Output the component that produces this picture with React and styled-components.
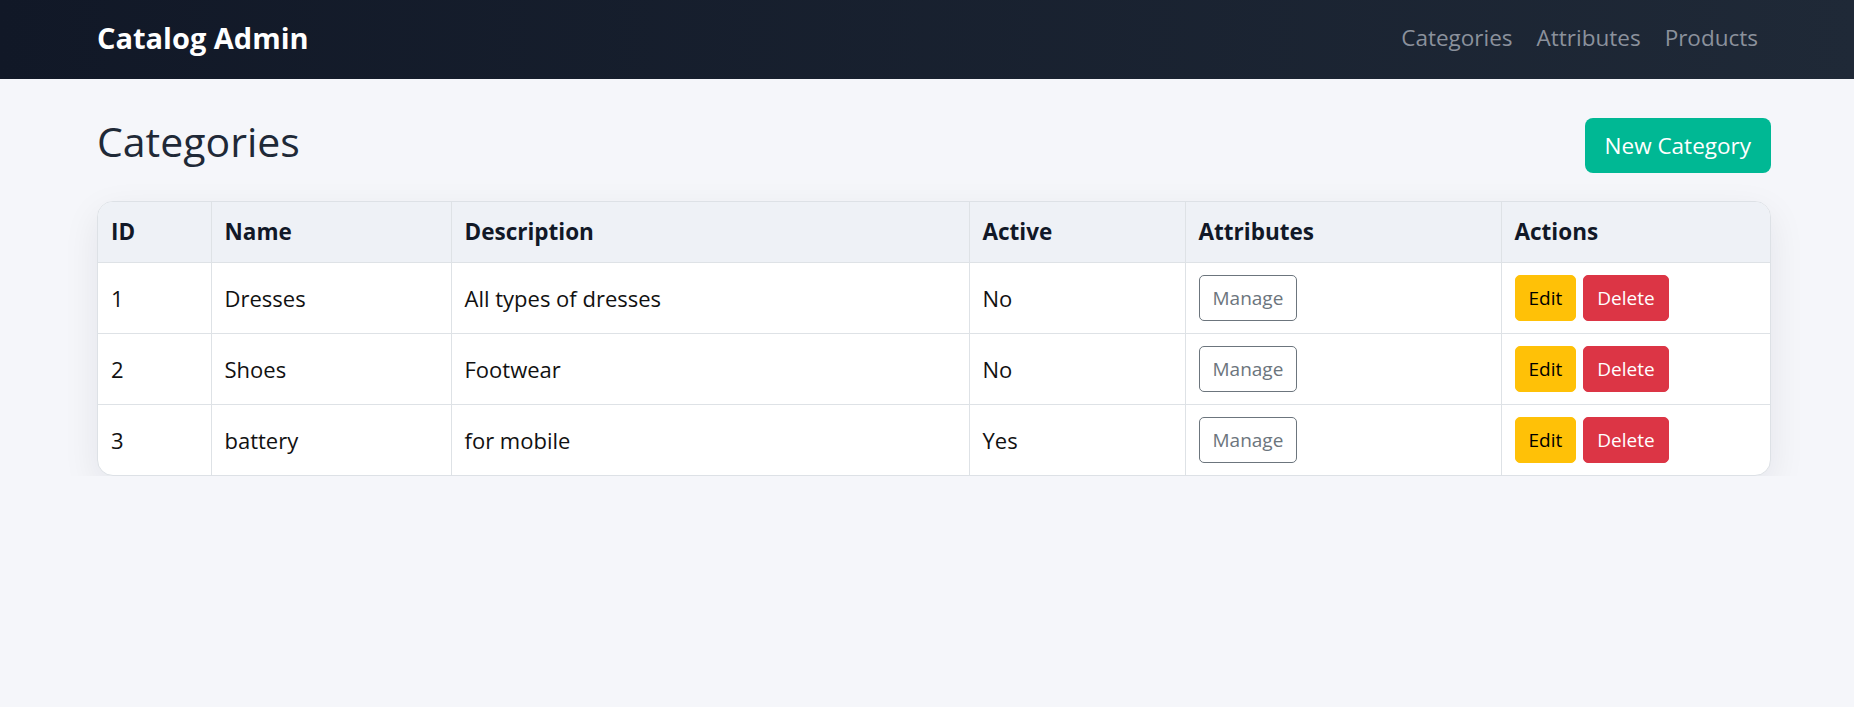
import styled, { createGlobalStyle } from "styled-components";

const categories = [
  { id: 1, name: "Dresses", description: "All types of dresses", active: false },
  { id: 2, name: "Shoes", description: "Footwear", active: false },
  { id: 3, name: "battery", description: "for mobile", active: true },
];

export default function App() {
  return (
    <>
      <GlobalStyle />
      <Navbar>
        <Brand>Catalog Admin</Brand>
        <NavLinks>
          <NavLink href="#">Categories</NavLink>
          <NavLink href="#">Attributes</NavLink>
          <NavLink href="#">Products</NavLink>
        </NavLinks>
      </Navbar>
      <Main>
        <PageHeader>
          <Title>Categories</Title>
          <PrimaryButton>New Category</PrimaryButton>
        </PageHeader>
        <TableCard>
          <Table>
            <colgroup>
              <col style={{ width: 113 }} />
              <col style={{ width: 240 }} />
              <col style={{ width: 518 }} />
              <col style={{ width: 216 }} />
              <col style={{ width: 316 }} />
              <col />
            </colgroup>
            <thead>
              <tr>
                <Th>ID</Th>
                <Th>Name</Th>
                <Th>Description</Th>
                <Th>Active</Th>
                <Th>Attributes</Th>
                <Th>Actions</Th>
              </tr>
            </thead>
            <tbody>
              {categories.map((c) => (
                <tr key={c.id}>
                  <Td>{c.id}</Td>
                  <Td>{c.name}</Td>
                  <Td>{c.description}</Td>
                  <Td>{c.active ? "Yes" : "No"}</Td>
                  <Td>
                    <SmallButton $variant="outline">Manage</SmallButton>
                  </Td>
                  <Td>
                    <Actions>
                      <SmallButton $variant="warning">Edit</SmallButton>
                      <SmallButton $variant="danger">Delete</SmallButton>
                    </Actions>
                  </Td>
                </tr>
              ))}
            </tbody>
          </Table>
        </TableCard>
      </Main>
    </>
  );
}

const GlobalStyle = createGlobalStyle`
  html, body {
    margin: 0;
    background: #f5f6fa;
    font-family: 'Open Sans', 'Noto Sans', sans-serif;
  }
  * { box-sizing: border-box; }
`;

const Navbar = styled.header`
  height: 79px;
  padding: 0 84px 5px 97px;
  display: flex;
  align-items: center;
  justify-content: space-between;
  background: linear-gradient(90deg, #111827, #1f2937);
`;

const Brand = styled.div`
  color: #ffffff;
  font-weight: 700;
  font-size: 29px;
`;

const NavLinks = styled.nav`
  display: flex;
  gap: 24px;
  padding-right: 12px;
`;

const NavLink = styled.a`
  color: #8b919c;
  text-decoration: none;
  font-size: 22.5px;
`;

const Main = styled.main`
  padding: 39px 83px 0 97px;
`;

const PageHeader = styled.div`
  display: flex;
  align-items: center;
  justify-content: space-between;
  margin-bottom: 28px;
`;

const Title = styled.h1`
  margin: 0;
  padding-bottom: 9px;
  font-size: 41px;
  line-height: 46px;
  font-weight: 500;
  color: #1f2937;
`;

const PrimaryButton = styled.button`
  height: 55px;
  padding: 0 20px;
  border: none;
  border-radius: 8px;
  background: #00b894;
  color: #ffffff;
  font-family: inherit;
  font-size: 22.5px;
`;

const TableCard = styled.div`
  background: #ffffff;
  border: 1px solid #dde1e6;
  border-radius: 16px;
  overflow: hidden;
  box-shadow: 0 12px 36px rgba(17, 24, 39, 0.08);
`;

const Table = styled.table`
  width: 100%;
  border-collapse: collapse;
  table-layout: fixed;
`;

const Th = styled.th`
  text-align: left;
  padding: 13px 13px;
  background: #eef1f6;
  color: #111827;
  font-size: 22.5px;
  font-weight: 700;
  line-height: 34px;
  border-left: 1px solid #dee2e6;
  border-bottom: 1px solid #dee2e6;
  &:first-child { border-left: none; }
`;

const Td = styled.td`
  padding: 12px 13px;
  color: #111111;
  font-size: 22px;
  line-height: 34px;
  border-left: 1px solid #dee2e6;
  border-bottom: 1px solid #dee2e6;
  &:first-child { border-left: none; }
  tr:last-child & { border-bottom: none; }
`;

const Actions = styled.div`
  display: flex;
  gap: 7px;
`;

const variants = {
  outline: "background: #ffffff; color: #6c757d; border: 1px solid #6c757d;",
  warning: "background: #ffc107; color: #000000; border: 1px solid #ffc107;",
  danger: "background: #dc3545; color: #ffffff; border: 1px solid #dc3545;",
};

const SmallButton = styled.button`
  height: 46px;
  padding: 0 13px;
  border-radius: 5px;
  font-family: inherit;
  font-size: 19px;
  vertical-align: middle;
  ${(p) => variants[p.$variant]}
`;
